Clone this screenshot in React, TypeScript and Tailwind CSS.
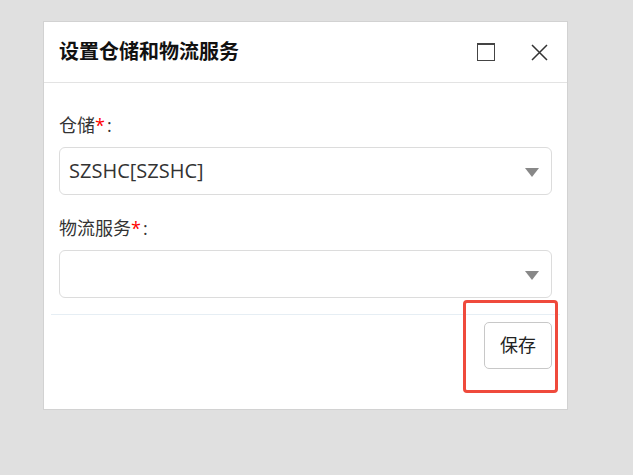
import React from "react";

const FONT = { fontFamily: '"Open Sans", "Noto Sans CJK SC", sans-serif' };

const SelectBox = ({ value }: { value?: string }) => (
  <div className="relative h-[48px] rounded-[6px] border border-[#dcdcdc] bg-white flex items-center pl-[9px] pr-[12px]">
    <span className="text-[20px] text-[#333] leading-none">{value}</span>
    <svg className="absolute right-[12px] top-[20px]" width="14" height="9" viewBox="0 0 14 9">
      <path d="M0 0 L14 0 L7 9 Z" fill="#888" />
    </svg>
  </div>
);

const FieldLabel = ({ text }: { text: string }) => (
  <div className="h-[24px] flex items-center text-[18px] text-[#333] leading-none">
    {text}
    <span className="text-[#f00]">*</span>
    <span className="ml-[2px]">:</span>
  </div>
);

export default function App() {
  return (
    <div className="min-h-screen w-full bg-[#e0e0e0] pt-[21px] pl-[43px]" style={FONT}>
      <div className="relative w-[525px] h-[389px] bg-white border border-[#d2d2d2] flex flex-col">
        {/* header */}
        <div className="h-[61px] flex items-center justify-between border-b border-[#e3e3e3] pl-[15px] pr-[19px]">
          <span className="text-[20px] font-bold text-[#111] leading-none">设置仓储和物流服务</span>
          <div className="flex items-center gap-[36px]">
            <div className="w-[18px] h-[18px] border-[1.5px] border-t-[2.5px] border-[#444]" />
            <svg width="17" height="17" viewBox="0 0 17 17">
              <path d="M1 1 L16 16 M16 1 L1 16" stroke="#333" strokeWidth="1.5" />
            </svg>
          </div>
        </div>
        {/* body */}
        <div className="px-[15px] pt-[30px]">
          <FieldLabel text="仓储" />
          <div className="mt-[10px]">
            <SelectBox value="SZSHC[SZSHC]" />
          </div>
          <div className="mt-[21px]">
            <FieldLabel text="物流服务" />
          </div>
          <div className="mt-[10px]">
            <SelectBox />
          </div>
        </div>
        {/* footer */}
        <div className="mx-[7px] mt-[16px] border-t border-[#e6eef4]" />
        <div className="flex justify-end pr-[15px] pt-[7px]">
          <button className="w-[68px] h-[47px] rounded-[5px] border border-[#c8c8c8] bg-white text-[18px] text-[#222]">
            保存
          </button>
        </div>
        {/* highlight */}
        <div className="absolute left-[419px] top-[278px] w-[95px] h-[93px] border-[3px] border-[#ef4a3c] rounded-[4px]" />
      </div>
    </div>
  );
}
